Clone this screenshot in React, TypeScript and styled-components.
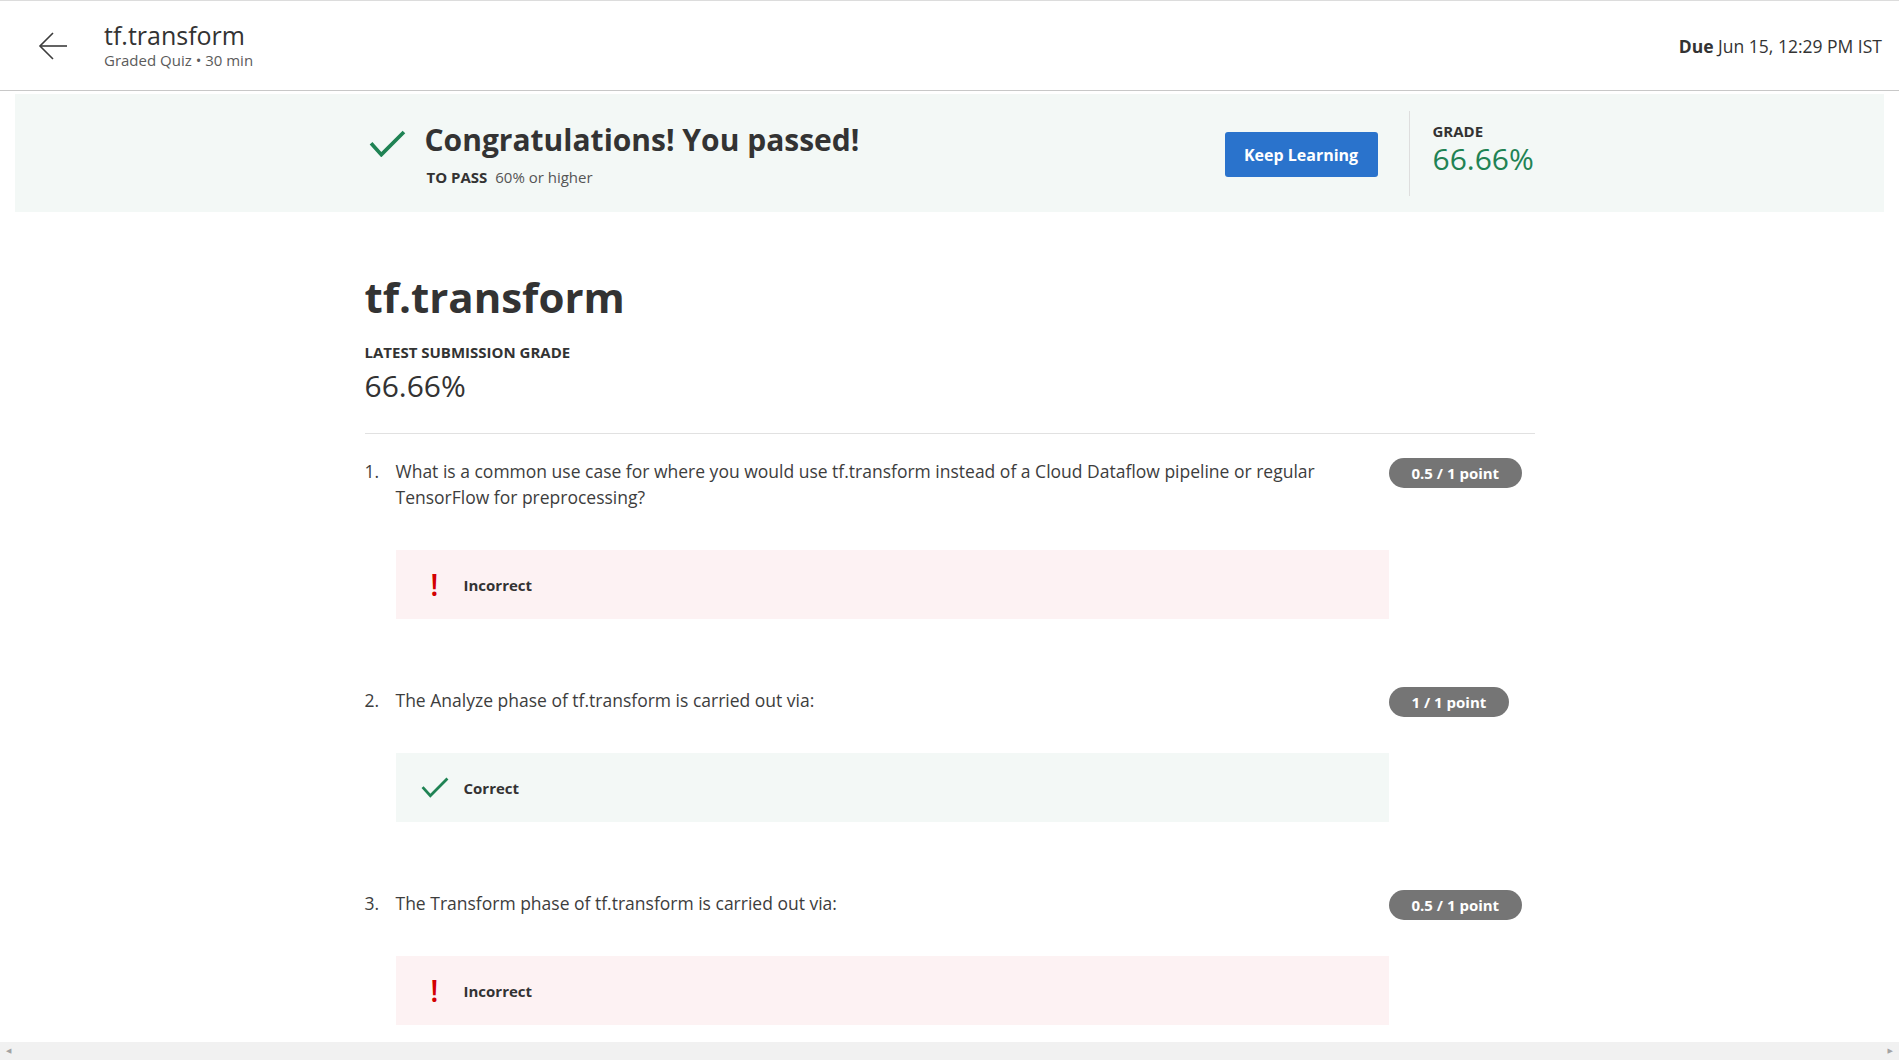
import React from 'react';
import styled, { createGlobalStyle } from 'styled-components';

type Result = 'correct' | 'incorrect';

type Question = {
  id: number;
  prompt: string;
  points: string;
  result: Result;
};

const questions: Question[] = [
  {
    id: 1,
    prompt:
      'What is a common use case for where you would use tf.transform instead of a Cloud Dataflow pipeline or regular TensorFlow for preprocessing?',
    points: '0.5 / 1 point',
    result: 'incorrect',
  },
  {
    id: 2,
    prompt: 'The Analyze phase of tf.transform is carried out via:',
    points: '1 / 1 point',
    result: 'correct',
  },
  {
    id: 3,
    prompt: 'The Transform phase of tf.transform is carried out via:',
    points: '0.5 / 1 point',
    result: 'incorrect',
  },
];

const GlobalStyle = createGlobalStyle`
  body {
    margin: 0;
    overflow: hidden;
    background: #fff;
    font-family: "Open Sans", "Noto Sans", sans-serif;
    color: #333;
  }
`;

function BackArrow() {
  return (
    <svg width="30" height="30" viewBox="0 0 30 30" fill="none" stroke="#3c3c3c" strokeWidth="1.6">
      <path d="M29 15H2" />
      <path d="M15 2L2 15l13 13" />
    </svg>
  );
}

function CheckMark({ size }: { size: number }) {
  return (
    <svg width={size} height={size * 0.75} viewBox="0 0 36 27" fill="none" stroke="#1f8354" strokeWidth="3.6">
      <path d="M2 13l10 11L34 2" />
    </svg>
  );
}

function App() {
  return (
    <>
      <GlobalStyle />
      <Header>
        <BackButton aria-label="Back">
          <BackArrow />
        </BackButton>
        <HeaderTitleBlock>
          <HeaderTitle>tf.transform</HeaderTitle>
          <HeaderSub>Graded Quiz • 30 min</HeaderSub>
        </HeaderTitleBlock>
        <DueText>
          <strong>Due</strong> Jun 15, 12:29 PM IST
        </DueText>
      </Header>

      <Banner>
        <BannerInner>
          <PassIcon>
            <CheckMark size={37} />
          </PassIcon>
          <PassBlock>
            <PassHeading>Congratulations! You passed!</PassHeading>
            <PassMeta>
              <strong>TO PASS</strong> 60% or higher
            </PassMeta>
          </PassBlock>
          <KeepButton type="button">Keep Learning</KeepButton>
          <VDivider />
          <GradeBlock>
            <GradeLabel>GRADE</GradeLabel>
            <GradeValue>66.66%</GradeValue>
          </GradeBlock>
        </BannerInner>
      </Banner>

      <Main>
        <QuizTitle>tf.transform</QuizTitle>
        <Label>LATEST SUBMISSION GRADE</Label>
        <Score>66.66%</Score>
        <HRule />

        {questions.map((q) => (
          <QuestionRow key={q.id}>
            <QNum>{q.id}.</QNum>
            <QBody>
              <QPrompt>{q.prompt}</QPrompt>
              <Feedback $result={q.result}>
                <FeedbackIcon>
                  {q.result === 'correct' ? <CheckMark size={28} /> : <Bang>!</Bang>}
                </FeedbackIcon>
                <FeedbackText>{q.result === 'correct' ? 'Correct' : 'Incorrect'}</FeedbackText>
              </Feedback>
            </QBody>
            <PointsCol>
              <Badge>{q.points}</Badge>
            </PointsCol>
          </QuestionRow>
        ))}
      </Main>

      <ScrollStrip>
        <ScrollArrow>◀</ScrollArrow>
        <ScrollArrow>▶</ScrollArrow>
      </ScrollStrip>
    </>
  );
}

const Header = styled.header`
  height: 89px;
  display: flex;
  align-items: center;
  padding: 0 17px 0 38px;
  border-top: 1px solid #dcdcdc;
  border-bottom: 1px solid #c8c8c8;
`;

const BackButton = styled.button`
  width: 30px;
  height: 30px;
  padding: 0;
  border: none;
  background: none;
  display: flex;
  cursor: pointer;
`;

const HeaderTitleBlock = styled.div`
  margin-left: 36px;
  display: flex;
  flex-direction: column;
`;

const HeaderTitle = styled.div`
  font-size: 25px;
  line-height: 30px;
  color: #333;
`;

const HeaderSub = styled.div`
  font-size: 15px;
  line-height: 21px;
  color: #5b5b5b;
`;

const DueText = styled.div`
  margin-left: auto;
  font-size: 17.5px;
  color: #333;

  strong {
    font-weight: 700;
  }
`;

const Banner = styled.section`
  margin: 3px 15px 0;
  height: 118px;
  background: #f3f8f6;
  display: flex;
  align-items: center;
`;

const BannerInner = styled.div`
  width: 1170px;
  margin: 0 auto;
  display: flex;
  align-items: center;
`;

const PassIcon = styled.div`
  align-self: flex-start;
  margin: 19px 0 0 4px;
  display: flex;
`;

const PassBlock = styled.div`
  margin-left: 19px;
  display: flex;
  flex-direction: column;
  gap: 7px;
`;

const PassHeading = styled.h2`
  margin: 0;
  font-size: 30px;
  line-height: 40px;
  font-weight: 700;
  color: #333;
`;

const PassMeta = styled.div`
  padding-left: 2px;
  font-size: 15px;
  line-height: 20px;
  color: #555;

  strong {
    color: #333;
    margin-right: 4px;
  }
`;

const KeepButton = styled.button`
  margin-left: auto;
  width: 153px;
  height: 45px;
  margin-top: 3px;
  border: none;
  border-radius: 3px;
  background: #2a73cc;
  color: #fff;
  font-family: inherit;
  font-size: 16px;
  font-weight: 700;
  cursor: pointer;
`;

const VDivider = styled.div`
  width: 1px;
  height: 85px;
  margin: 0 23px 0 31px;
  background: #dedede;
`;

const GradeBlock = styled.div`
  width: 102px;
  padding-bottom: 9px;
  display: flex;
  flex-direction: column;
`;

const GradeLabel = styled.div`
  font-size: 15px;
  line-height: 20px;
  font-weight: 700;
  color: #333;
`;

const GradeValue = styled.div`
  font-size: 30px;
  line-height: 36px;
  color: #1f8354;
`;

const Main = styled.main`
  width: 1170px;
  margin: 0 auto;
  padding-top: 61px;
`;

const QuizTitle = styled.h1`
  margin: 0;
  font-size: 42px;
  line-height: 48px;
  font-weight: 700;
  color: #333;
`;

const Label = styled.div`
  margin-top: 21px;
  font-size: 15px;
  line-height: 20px;
  font-weight: 700;
  color: #333;
`;

const Score = styled.div`
  margin-top: 6px;
  font-size: 30px;
  line-height: 36px;
  color: #333;
`;

const HRule = styled.hr`
  margin: 29px 0 24px;
  border: none;
  border-top: 1px solid #e1e1e1;
`;

const QuestionRow = styled.div`
  display: flex;
  align-items: flex-start;
  margin-bottom: 68px;
`;

const QNum = styled.div`
  width: 31px;
  flex-shrink: 0;
  font-size: 17.5px;
  line-height: 26px;
  color: #3d3d3d;
`;

const QBody = styled.div`
  flex: 1;
  min-width: 0;
`;

const QPrompt = styled.p`
  margin: 0;
  font-size: 17.5px;
  line-height: 26px;
  color: #3d3d3d;
`;

const Feedback = styled.div<{ $result: Result }>`
  margin-top: 40px;
  height: 69px;
  padding: 0 25px;
  display: flex;
  align-items: center;
  gap: 15px;
  background: ${({ $result }) => ($result === 'correct' ? '#f3f8f6' : '#fdf2f3')};
`;

const FeedbackIcon = styled.div`
  width: 28px;
  display: flex;
  justify-content: center;
  align-items: center;
`;

const Bang = styled.span`
  font-size: 30px;
  line-height: 30px;
  font-weight: 600;
  color: #d30001;
`;

const FeedbackText = styled.span`
  font-size: 15px;
  font-weight: 700;
  color: #333;
`;

const PointsCol = styled.div`
  width: 146px;
  flex-shrink: 0;
  display: flex;
`;

const Badge = styled.span`
  height: 30px;
  padding: 0 23px;
  border-radius: 15px;
  background: #757575;
  color: #fff;
  font-size: 15px;
  font-weight: 700;
  display: inline-flex;
  align-items: center;
  white-space: nowrap;
`;

const ScrollStrip = styled.div`
  position: fixed;
  left: 0;
  right: 0;
  bottom: 0;
  height: 18px;
  padding: 0 6px;
  background: #f1f1f1;
  display: flex;
  justify-content: space-between;
  align-items: center;
`;

const ScrollArrow = styled.span`
  font-family: "DejaVu Sans", sans-serif;
  font-size: 7px;
  color: #a3a3a3;
`;

export default App;
